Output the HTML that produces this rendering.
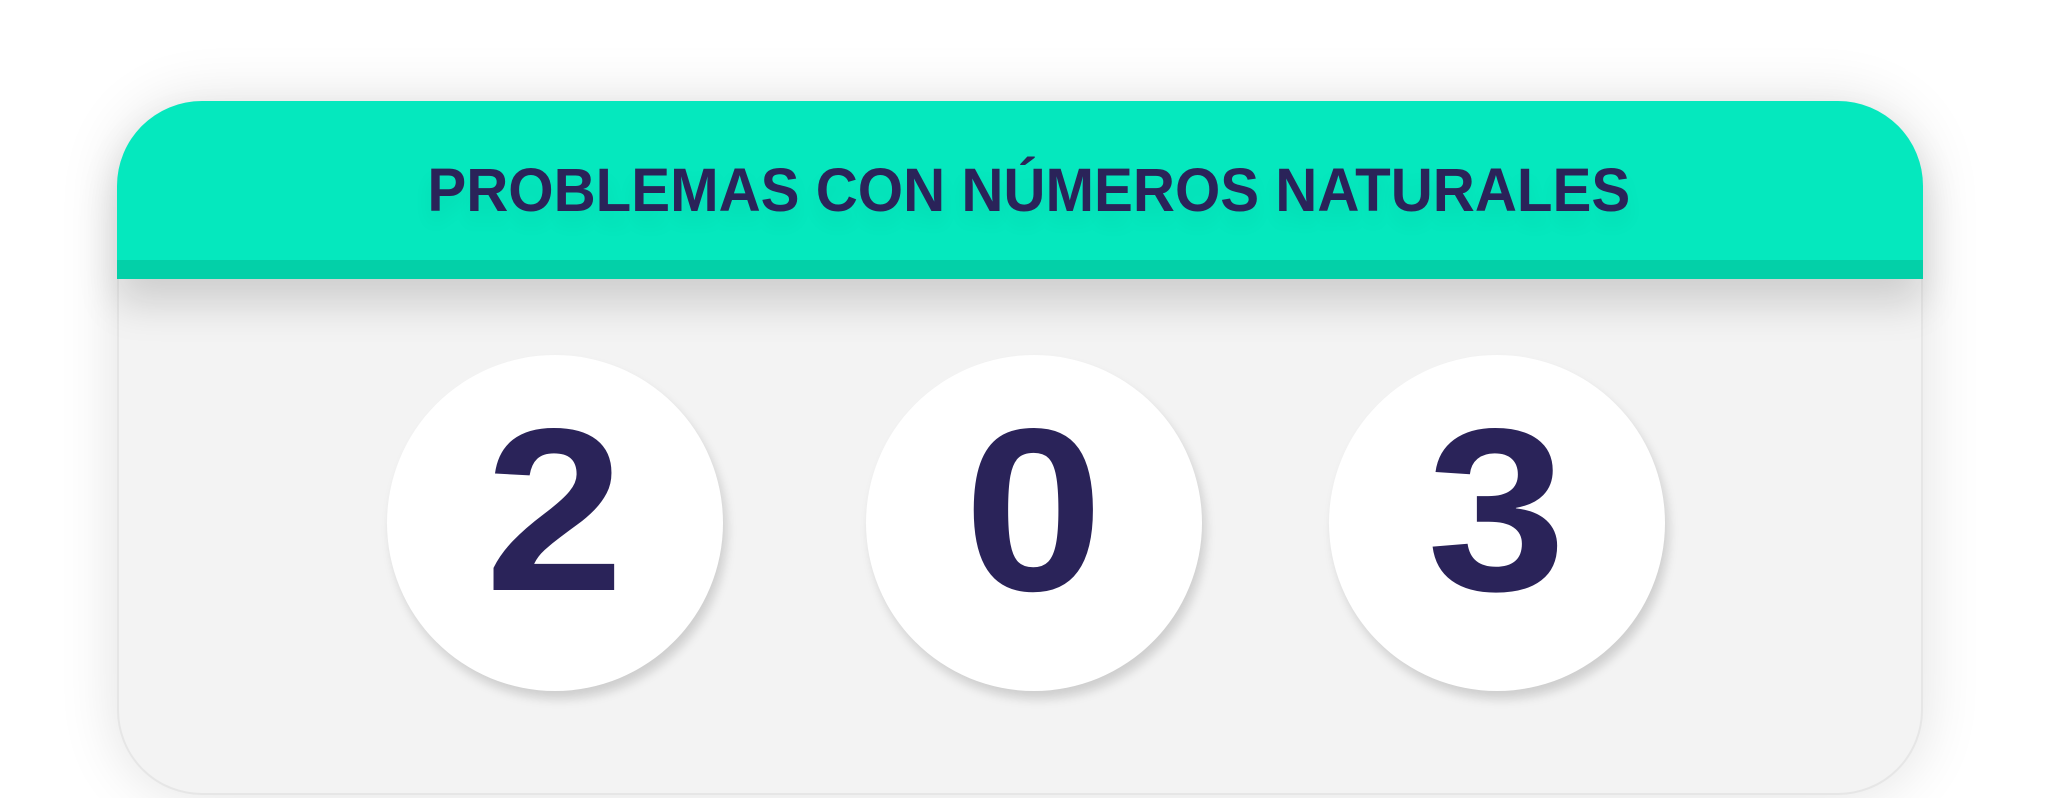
<!DOCTYPE html>
<html><head><meta charset="utf-8"><style>
html,body{margin:0;padding:0;background:#fff;width:2057px;height:798px;overflow:hidden;position:relative;font-family:"Liberation Sans",sans-serif}
.card{position:absolute;left:117px;top:101px;width:1806px;height:694px;border-radius:85px;background:#f3f3f3;box-shadow:0 0 60px rgba(0,0,0,0.12);overflow:hidden;border:2px solid #e6e6e6;box-sizing:border-box}
.head{position:absolute;left:117px;top:101px;width:1806px;height:178px;border-radius:85px 85px 0 0;background:#05e8be;box-shadow:0 25px 40px rgba(0,0,0,0.15)}
.strip{position:absolute;left:0;bottom:0;width:100%;height:19px;background:#03d0a8}
.title{position:absolute;left:0;width:100%;top:155px;text-align:center;font-weight:bold;font-size:61px;line-height:70px;color:#2a2359;white-space:nowrap}
.title span{display:inline-block;transform:scaleX(0.955);text-shadow:0 12px 20px rgba(0,0,0,0.06)}
.c{position:absolute;width:336px;height:336px;border-radius:50%;background:#fff;box-shadow:4px 8px 10px rgba(0,0,0,0.15);top:355px;text-align:center;font-weight:bold;font-size:232px;line-height:312px;color:#2a2359}
.c span{display:inline-block;transform:scaleX(1.08)}
</style></head><body>
<div class="card"></div>
<div class="head"><div class="strip"></div></div>
<div class="title"><span>PROBLEMAS CON NÚMEROS NATURALES</span></div>
<div class="c" style="left:387px"><span>2</span></div>
<div class="c" style="left:866px"><span>0</span></div>
<div class="c" style="left:1329px"><span>3</span></div>
</body></html>
